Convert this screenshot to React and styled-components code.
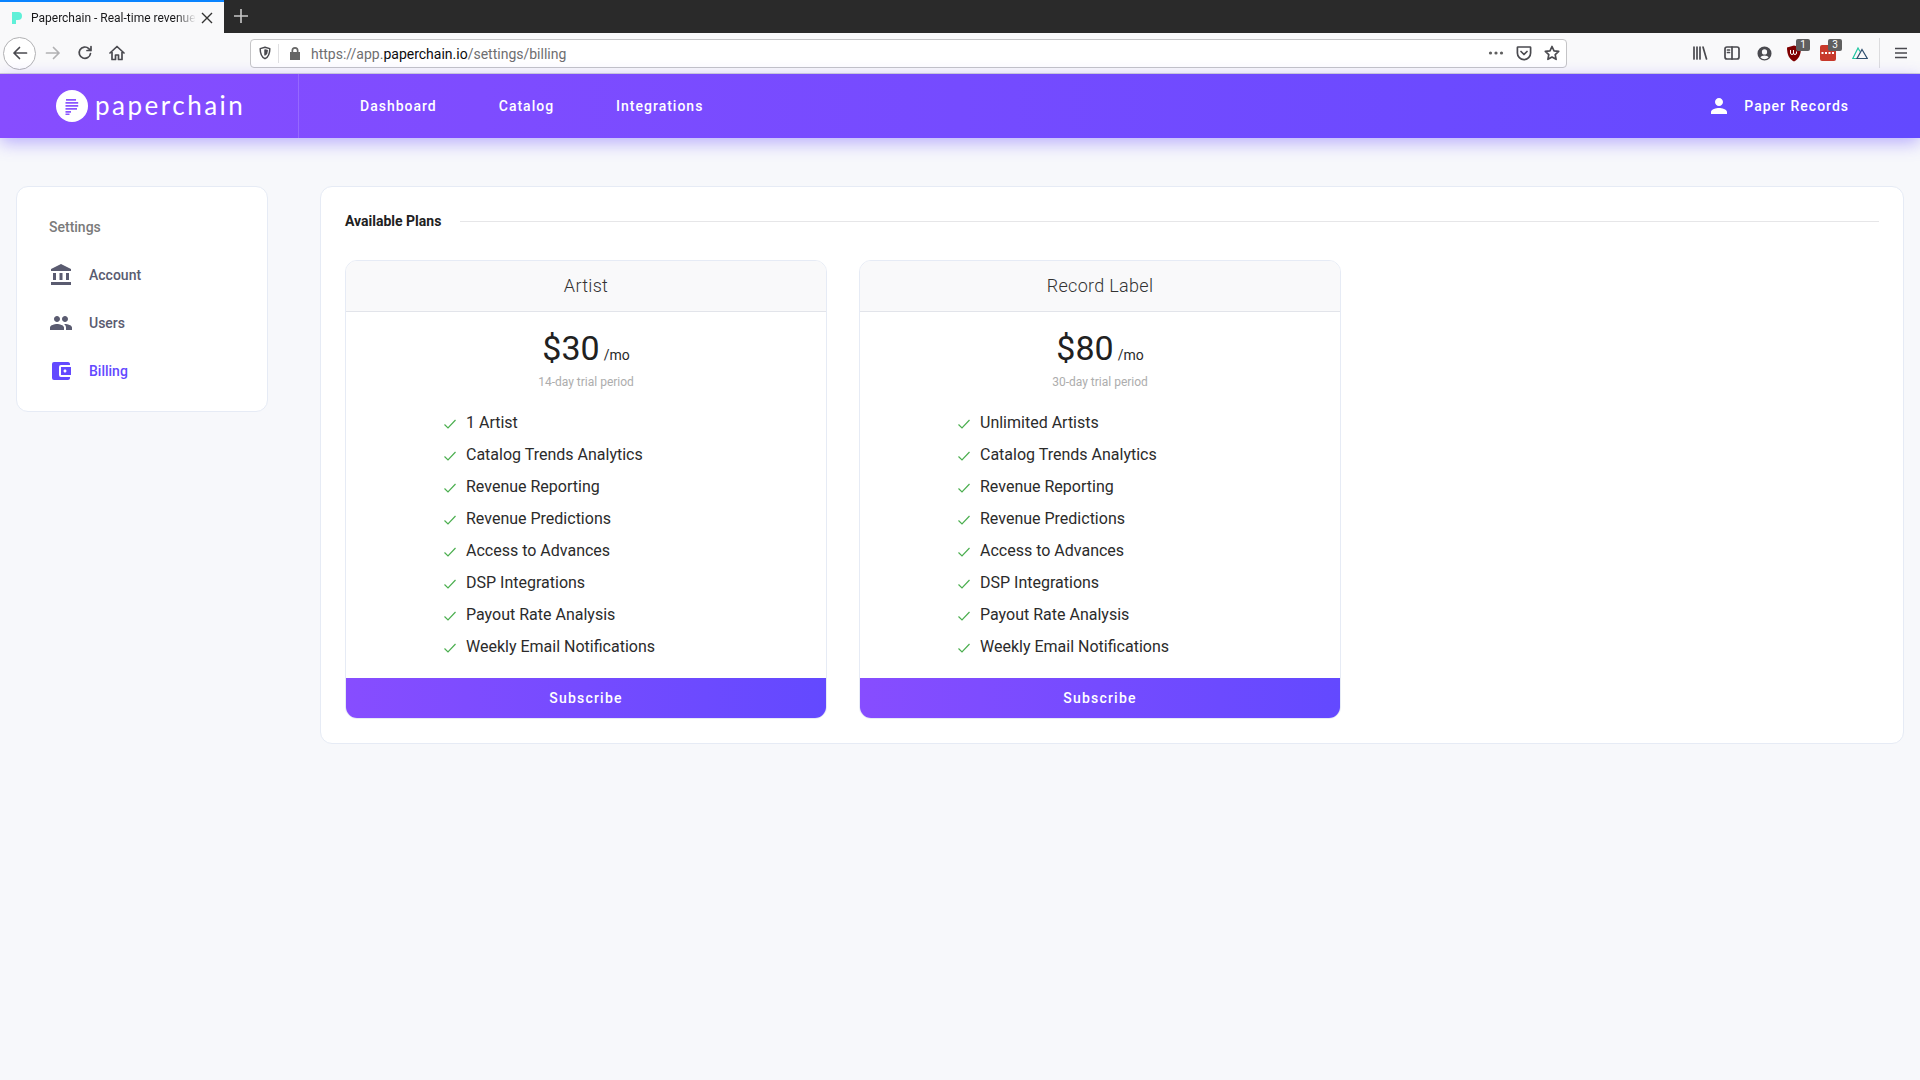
import styled, { createGlobalStyle } from "styled-components";
import { MdAccountBalance, MdPeople, MdAccountBalanceWallet, MdPerson } from "react-icons/md";

const FEATURES = [
  "Catalog Trends Analytics",
  "Revenue Reporting",
  "Revenue Predictions",
  "Access to Advances",
  "DSP Integrations",
  "Payout Rate Analysis",
  "Weekly Email Notifications",
];

const PLANS = [
  { name: "Artist", price: "$30", trial: "14-day trial period", first: "1 Artist" },
  { name: "Record Label", price: "$80", trial: "30-day trial period", first: "Unlimited Artists" },
];

const GlobalStyle = createGlobalStyle`
  html, body {
    margin: 0;
    height: 100%;
    overflow: hidden;
    background: #f7f8fb;
    font-family: Roboto, "Liberation Sans", sans-serif;
  }
  * { box-sizing: border-box; }
`;

const TabStrip = styled.div`
  display: flex;
  align-items: stretch;
  height: 33px;
  background: #2a2a2a;
`;

const Tab = styled.div`
  display: flex;
  align-items: center;
  width: 224px;
  padding: 0 0 0 11px;
  background: #f9f9fa;
  border-top: 2px solid #0a84ff;
`;

const TabTitle = styled.span`
  width: 165px;
  margin-left: 8px;
  overflow: hidden;
  white-space: nowrap;
  font-size: 12px;
  color: #18181a;
  -webkit-mask-image: linear-gradient(90deg, #000 88%, transparent);
  mask-image: linear-gradient(90deg, #000 88%, transparent);
`;

const TabClose = styled.svg`
  width: 12px;
  height: 12px;
  margin-left: 5px;
`;

const NewTab = styled.div`
  display: flex;
  align-items: center;
  justify-content: center;
  width: 34px;
  padding-bottom: 2px;
`;

const Toolbar = styled.div`
  display: flex;
  align-items: center;
  height: 41px;
  padding-left: 3px;
  background: #f9f9fa;
  border-bottom: 1px solid #d4d4d6;
`;

const BackCircle = styled.div`
  display: flex;
  align-items: center;
  justify-content: center;
  width: 33px;
  height: 33px;
  margin-right: 1px;
  background: #fff;
  border: 1px solid #b1b1b3;
  border-radius: 50%;
`;

const ToolButton = styled.div`
  position: relative;
  display: flex;
  align-items: center;
  justify-content: center;
  flex: none;
  width: 32px;
  height: 32px;
`;

const UrlBar = styled.div`
  display: flex;
  align-items: center;
  flex: none;
  width: 1317px;
  height: 29px;
  margin: 0 117px;
  padding: 0 0 0 7px;
  background: #fff;
  border: 1px solid #c4c4c6;
  border-radius: 4px;
`;

const UrlDivider = styled.div`
  width: 1px;
  height: 19px;
  margin: 0 9px 0 6px;
  background: #e0e0e2;
`;

const UrlText = styled.div`
  flex: 1;
  margin-left: 9px;
  padding-top: 2px;
  font-size: 14px;
  color: #6e6e70;
  b {
    font-weight: 400;
    color: #0c0c0d;
  }
`;

const UrlAction = styled.div`
  display: flex;
  align-items: center;
  justify-content: center;
  width: 28px;
`;

const ToolSeparator = styled.div`
  width: 1px;
  height: 30px;
  margin: 0 5px 0 3px;
  background: #dcdcde;
`;

const Badge = styled.span`
  position: absolute;
  top: 2px;
  left: 16px;
  width: 14px;
  height: 12px;
  background: #5f5f5f;
  border-radius: 2px;
  color: #fff;
  font-size: 10px;
  line-height: 12px;
  text-align: center;
`;

const ShieldSlot = styled.span`
  display: flex;
  margin-right: 4px;
`;

const Header = styled.header`
  position: relative;
  display: flex;
  align-items: stretch;
  height: 64px;
  background: linear-gradient(90deg, #874dff, #6349ff);
  box-shadow: 0 5px 16px rgba(99, 73, 255, 0.42);
  color: #fff;
`;

const Brand = styled.div`
  display: flex;
  align-items: center;
  gap: 7px;
  width: 299px;
  padding-left: 56px;
  border-right: 1px solid rgba(255, 255, 255, 0.16);
`;

const BrandName = styled.span`
  font-family: Lato, "Open Sans", sans-serif;
  font-size: 26px;
  letter-spacing: 2.5px;
  margin-top: -2px;
`;

const Nav = styled.nav`
  display: flex;
  align-items: center;
  gap: 62px;
  padding-left: 61px;
`;

const NavLink = styled.a`
  font-size: 14px;
  font-weight: 500;
  letter-spacing: 1px;
`;

const Profile = styled.div`
  display: flex;
  align-items: center;
  gap: 13px;
  margin-left: auto;
  padding-right: 71px;
  font-size: 14px;
  font-weight: 500;
  letter-spacing: 1px;
`;

const Page = styled.main`
  display: flex;
  align-items: flex-start;
  gap: 52px;
  padding: 48px 16px 0;
`;

const Card = styled.div`
  background: #fff;
  border: 1px solid #e6ebf5;
  border-radius: 12px;
`;

const Sidebar = styled(Card)`
  flex: none;
  width: 252px;
  height: 226px;
  padding: 31px 0 0 32px;
`;

const SideTitle = styled.div`
  height: 18px;
  margin-bottom: 15px;
  font-size: 14px;
  font-weight: 500;
  line-height: 18px;
  color: #7a7a7a;
`;

const SideItem = styled.a`
  display: flex;
  align-items: center;
  gap: 16px;
  height: 48px;
  font-size: 14px;
  font-weight: 500;
  color: ${(p) => (p.$active ? "#6349ff" : "#5a5b70")};
`;

const Content = styled(Card)`
  flex: 1;
  height: 558px;
  padding: 23px 24px 0;
`;

const SectionHead = styled.div`
  display: flex;
  align-items: center;
  gap: 19px;
  height: 22px;
  margin-bottom: 28px;
  font-size: 14px;
  font-weight: 700;
  color: #212121;
  white-space: nowrap;
  &::after {
    content: "";
    flex: 1;
    height: 1px;
    background: #e6e6e8;
  }
`;

const PlanRow = styled.div`
  display: flex;
  gap: 32px;
`;

const Plan = styled.section`
  display: flex;
  flex-direction: column;
  width: 482px;
  height: 459px;
  background: #fff;
  border: 1px solid #e6ebf5;
  border-radius: 12px;
  overflow: hidden;
`;

const PlanName = styled.div`
  height: 51px;
  background: #f9f9fa;
  border-bottom: 1px solid #e2e4ea;
  font-size: 18px;
  font-weight: 300;
  line-height: 50px;
  text-align: center;
  color: #333;
  letter-spacing: 0.3px;
`;

const PriceLine = styled.div`
  height: 44px;
  margin-top: 14px;
  font-size: 14px;
  line-height: 44px;
  text-align: center;
  color: #2a2a2a;
`;

const Price = styled.span`
  margin-right: 4px;
  font-size: 34px;
  color: #212121;
`;

const Trial = styled.div`
  margin-top: 4px;
  font-size: 12px;
  line-height: 16px;
  text-align: center;
  color: #adadad;
`;

const FeatureList = styled.ul`
  flex: 1;
  margin: 16px 0 0;
  padding: 0 0 0 98px;
  list-style: none;
`;

const Feature = styled.li`
  display: flex;
  align-items: center;
  gap: 10px;
  height: 32px;
  font-size: 16px;
  color: #2b2b2b;
`;

const Subscribe = styled.button`
  flex: none;
  height: 40px;
  padding: 0;
  background: linear-gradient(90deg, #874dff, #6349ff);
  border: 0;
  font: 500 14px Roboto, sans-serif;
  letter-spacing: 1.2px;
  color: #fff;
`;

const Glyph = ({ w = 16, h = 16, box = "0 0 16 16", color = "#4a4a4f", width = 1.7, fill = "none", children }) => (
  <svg width={w} height={h} viewBox={box} fill={fill} stroke={fill === "none" ? color : "none"} strokeWidth={width} strokeLinecap="round" strokeLinejoin="round">
    {children}
  </svg>
);

const Check = () => (
  <svg width="12" height="12" viewBox="0 0 12 12" fill="none" stroke="#4caf50" strokeWidth="1.2" style={{ marginTop: 3 }}>
    <path d="M0.5 6.5 L4 10 L11.5 2" />
  </svg>
);

const PaperMark = () => (
  <svg width="32" height="32" viewBox="0 0 32 32">
    <circle cx="16" cy="16" r="16" fill="#fff" />
    <path d="M10 9h10a4 4 0 0 1 0 1.7H10zM9.500 12h12.7v1.7H9.500zM9.500 15h12.7v1.7H9.500zM9.500 18h11.5v1.7H9.500zM9.500 21h5.5v1.7H9.500zM9.500 23.6h4v1.4h-4z" fill="#8b55ff" />
  </svg>
);

const PlanCard = ({ plan }) => (
  <Plan>
    <PlanName>{plan.name}</PlanName>
    <PriceLine>
      <Price>{plan.price}</Price>/mo
    </PriceLine>
    <Trial>{plan.trial}</Trial>
    <FeatureList>
      {[plan.first, ...FEATURES].map((f) => (
        <Feature key={f}>
          <Check />
          {f}
        </Feature>
      ))}
    </FeatureList>
    <Subscribe>Subscribe</Subscribe>
  </Plan>
);

const BrowserChrome = () => (
  <>
    <TabStrip>
      <Tab>
        <svg width="12" height="14" viewBox="0 0 12 14">
          <path d="M1 1h6a4 4 0 0 1 0 8H5v4H1z" fill="#5ff0d8" />
        </svg>
        <TabTitle>Paperchain - Real-time revenue</TabTitle>
        <TabClose viewBox="0 0 12 12" fill="none" stroke="#333" strokeWidth="1.4">
          <path d="M1 1l10 10M11 1L1 11" />
        </TabClose>
      </Tab>
      <NewTab>
        <svg width="14" height="14" viewBox="0 0 14 14" stroke="#c8c8c8" strokeWidth="1.6">
          <path d="M7 0v14M0 7h14" />
        </svg>
      </NewTab>
    </TabStrip>
    <Toolbar>
      <BackCircle>
        <Glyph><path d="M14.5 8H2M7.5 2.5 2 8l5.5 5.5" /></Glyph>
      </BackCircle>
      <ToolButton>
        <Glyph color="#b1b1b3"><path d="M1.5 8H14M8.5 2.5 14 8l-5.5 5.5" /></Glyph>
      </ToolButton>
      <ToolButton>
        <Glyph><path d="M13.5 8.5A5.7 5.7 0 1 1 11.8 3.6L14 5.5M14 1.5v4h-4" /></Glyph>
      </ToolButton>
      <ToolButton>
        <Glyph><path d="M1 8l7-6.5L15 8M3 7v7.5h3.5V10h3v4.500H13V7" /></Glyph>
      </ToolButton>
      <UrlBar>
        <Glyph w={14} h={14}><path d="M8 1.5l5.5 1.5c0 6-1.5 9.5-5.5 11.5C4 12.500 2.500 9 2.500 3z" /><path d="M8 4.500l2.500.7c0 2.500-.7 4-2.500 5z" fill="#4a4a4f" /></Glyph>
        <UrlDivider />
        <Glyph w={14} h={14} box="0 0 14 14" fill="#666">
          <path d="M3.500 6V4.500a3.500 3.500 0 0 1 7 0V6H12v8H2V6zM5.200 6h3.600V4.500a1.800 1.800 0 0 0-3.600 0z" />
        </Glyph>
        <UrlText>
          https://app.<b>paperchain.io</b>/settings/billing
        </UrlText>
        <UrlAction>
          <Glyph w={16} h={4} box="0 0 16 4" fill="#5f5f5f">
            <circle cx="2.500" cy="2" r="1.600" /><circle cx="8" cy="2" r="1.600" /><circle cx="13.500" cy="2" r="1.600" />
          </Glyph>
        </UrlAction>
        <UrlAction>
          <Glyph><path d="M2 2h12a.6.6 0 0 1 .6.6V8a6.600 6.600 0 0 1-13.200 0V2.600A.6.6 0 0 1 2 2z" /><path d="M5 6.500l3 3 3-3" /></Glyph>
        </UrlAction>
        <UrlAction>
          <Glyph><path d="M8 1.500l2 4.300 4.700.6-3.500 3.200.9 4.700L8 12l-4.100 2.300.9-4.700L1.300 6.400 6 5.800z" /></Glyph>
        </UrlAction>
      </UrlBar>
      <ToolButton>
        <Glyph><path d="M2 2v12M5 2v12M8 2v12M11 2l3.500 12" /></Glyph>
      </ToolButton>
      <ToolButton>
        <Glyph><rect x="1" y="2" width="14" height="12" rx="2" /><path d="M8 2v12M3.500 5h2M3.500 7.500h2" /></Glyph>
      </ToolButton>
      <ToolButton>
        <Glyph w={15} h={15} fill="#4a4a4f">
          <path fillRule="evenodd" d="M8 .5a7.500 7.500 0 1 0 0 15 7.500 7.500 0 0 0 0-15zM8 3.500a2.800 2.800 0 1 1 0 5.600 2.800 2.800 0 0 1 0-5.600zM3.500 12a5 3.200 0 0 1 9 0 6 6 0 0 1-9 0z" />
        </Glyph>
      </ToolButton>
      <ToolButton>
        <ShieldSlot>
          <svg width="14" height="17" viewBox="0 0 14 17">
            <path d="M7 .5L14 2.500c0 7-2 11.500-7 14C2 14 0 9.500 0 2.500z" fill="#800000" />
            <path d="M3.500 5v3a1.500 1.500 0 0 0 3 0V5M6.500 8a1.500 1.500 0 0 0 3 0V6.500" fill="none" stroke="#fff" strokeWidth="1" />
          </svg>
        </ShieldSlot>
        <Badge>1</Badge>
      </ToolButton>
      <ToolButton>
        <svg width="16" height="16" viewBox="0 0 16 16">
          <rect width="16" height="16" rx="2" fill="#c8392b" />
          <path d="M1.500 7h2v2h-2zM5 7h2v2H5zM8.500 7h2v2h-2zM12 7h2v2h-2z" fill="#fff" />
        </svg>
        <Badge>3</Badge>
      </ToolButton>
      <ToolButton>
        <svg width="16" height="14" viewBox="0 0 16 14" fill="none" strokeWidth="1.200">
          <path d="M5 12.500H.8L6 2l2 3.500" stroke="#1fc6a0" />
          <path d="M10 3.500l5.300 9H5z" stroke="#2f4f6f" />
        </svg>
      </ToolButton>
      <ToolSeparator />
      <ToolButton>
        <Glyph w={12} h={12} box="0 0 12 12"><path d="M0 1.500h12M0 6h12M0 10.500h12" /></Glyph>
      </ToolButton>
    </Toolbar>
  </>
);

export default function App() {
  return (
    <>
      <GlobalStyle />
      <BrowserChrome />
      <Header>
        <Brand>
          <PaperMark />
          <BrandName>paperchain</BrandName>
        </Brand>
        <Nav>
          <NavLink>Dashboard</NavLink>
          <NavLink>Catalog</NavLink>
          <NavLink>Integrations</NavLink>
        </Nav>
        <Profile>
          <MdPerson size={24} />
          Paper Records
        </Profile>
      </Header>
      <Page>
        <Sidebar>
          <SideTitle>Settings</SideTitle>
          <SideItem><MdAccountBalance size={24} />Account</SideItem>
          <SideItem><MdPeople size={24} />Users</SideItem>
          <SideItem $active><MdAccountBalanceWallet size={24} />Billing</SideItem>
        </Sidebar>
        <Content>
          <SectionHead>Available Plans</SectionHead>
          <PlanRow>
            {PLANS.map((p) => (
              <PlanCard key={p.name} plan={p} />
            ))}
          </PlanRow>
        </Content>
      </Page>
    </>
  );
}
